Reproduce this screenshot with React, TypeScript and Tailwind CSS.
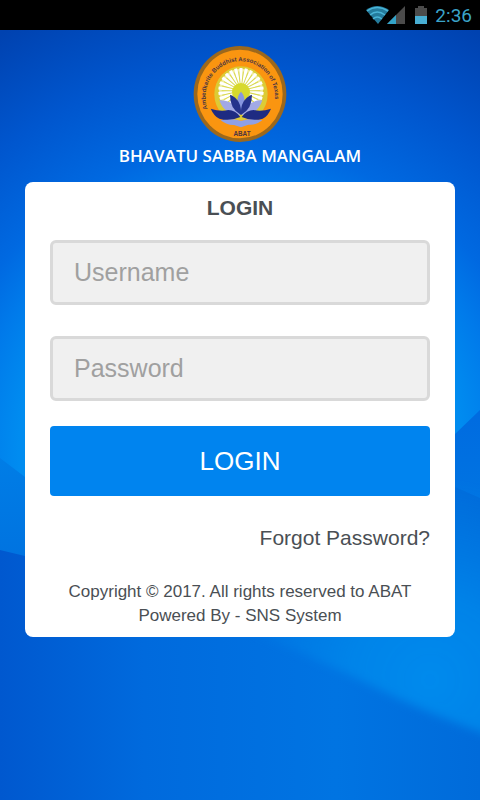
import { useState } from "react";

const rays = Array.from({ length: 26 }, (_, index) => (index * 360) / 26);

function Wallpaper() {
  return (
    <svg
      className="absolute inset-0 -z-10 h-full w-full"
      viewBox="0 0 480 770"
      preserveAspectRatio="none"
      aria-hidden="true"
    >
      <defs>
        <radialGradient id="sky" gradientUnits="userSpaceOnUse" cx="240" cy="420" r="480">
          <stop offset="0" stopColor="#0092f4" />
          <stop offset="0.46" stopColor="#008cf0" />
          <stop offset="0.55" stopColor="#007aea" />
          <stop offset="0.63" stopColor="#0069e1" />
          <stop offset="0.8" stopColor="#0056ce" />
          <stop offset="1" stopColor="#0042b0" />
        </radialGradient>
        <linearGradient id="ridge" gradientUnits="userSpaceOnUse" x1="0" y1="400" x2="0" y2="560">
          <stop offset="0" stopColor="#0080e8" />
          <stop offset="1" stopColor="#0070de" />
        </linearGradient>
        <linearGradient id="peak" gradientUnits="userSpaceOnUse" x1="0" y1="380" x2="0" y2="480">
          <stop offset="0" stopColor="#006be0" />
          <stop offset="1" stopColor="#0075e2" />
        </linearGradient>
        <linearGradient id="floor" x1="0" y1="0" x2="1" y2="0">
          <stop offset="0" stopColor="#0058cf" />
          <stop offset="0.3" stopColor="#006add" />
          <stop offset="0.7" stopColor="#0074e2" />
          <stop offset="1" stopColor="#006bda" />
        </linearGradient>
        <radialGradient id="glow" gradientUnits="userSpaceOnUse" cx="430" cy="650" r="200">
          <stop offset="0" stopColor="#008aed" />
          <stop offset="0.4" stopColor="#0086ea" stopOpacity="0.9" />
          <stop offset="1" stopColor="#0080e8" stopOpacity="0" />
        </radialGradient>
        <filter id="soften" x="-10%" y="-10%" width="120%" height="120%">
          <feGaussianBlur stdDeviation="5" />
        </filter>
      </defs>
      <rect width="480" height="770" fill="url(#sky)" />
      <path d="M0 428 L25 447 L240 560 V770 H0Z" fill="url(#ridge)" />
      <path d="M240 560 L455 404 L480 380 V770 H240Z" fill="url(#peak)" />
      <path d="M0 520 L25 526 L240 570 L455 457 L480 468 V770 H0Z" fill="url(#floor)" />
      <path
        d="M220 590 V440 H520 V716 Q440 690 370 655 Q310 625 220 590Z"
        fill="url(#glow)"
        filter="url(#soften)"
      />
    </svg>
  );
}

function StatusIcons() {
  return (
    <svg className="h-6 w-16" viewBox="0 0 64 24" aria-hidden="true">
      <path d="M1 7 Q12 -1 24 7 L13 21Z" fill="#247b9c" />
      <g fill="none" stroke="#4ab4d6" strokeWidth="1.5">
        <path d="M2 8 Q12 1 23 8" />
        <path d="M5 12 Q12 6 20 12" />
        <path d="M8 16 Q12 12 17 16" />
      </g>
      <path d="M40 3 V21 H22Z" fill="#4b4b4b" />
      <path d="M31 12 V21 H22Z" fill="#33a3c9" />
      <path d="M50 5 H53 V3 H59 V5 H62 V21 H50Z" fill="#4b4b4b" />
      <path d="M50 13 H62 V21 H50Z" fill="#48aed3" />
    </svg>
  );
}

function Logo() {
  return (
    <svg className="h-24 w-24" viewBox="21 19 288 288" role="img" aria-label="ABAT">
      <defs>
        <path id="motto" d="M68 208 A104 107 0 1 1 262 212" />
      </defs>
      <ellipse cx="165" cy="163" rx="139" ry="144" fill="#9c681c" />
      <ellipse cx="165" cy="163" rx="128" ry="133" fill="#fa9510" />
      <ellipse cx="168" cy="164" rx="80" ry="84" fill="#dccb35" />
      <circle cx="168" cy="153" r="66" fill="#efecA0" />
      <g stroke="#ffffff" strokeWidth="9">
        {rays.map((angle) => (
          <path key={angle} d="M168 153 V85" transform={`rotate(${angle} 168 153)`} />
        ))}
      </g>
      <g stroke="#d9d850" strokeWidth="3">
        {rays.map((angle) => (
          <path key={angle} d="M168 153 V95" transform={`rotate(${angle + 7} 168 153)`} />
        ))}
      </g>
      <circle cx="168" cy="157" r="27" fill="#d7d92c" />
      <path d="M87 211 Q166 272 251 211 Q238 247 168 249 Q99 247 87 211Z" fill="#f2a33c" />
      <path d="M107 242 Q135 233 168 244 Q202 233 232 242 Q211 258 190 255 L168 263 L147 256 Q126 257 107 242Z" fill="#8fa0e6" />
      <path d="M168 156 Q183 171 177 192 L168 218 L159 192 Q153 171 168 156Z" fill="#8796df" />
      <path d="M103 182 Q148 180 166 226 Q118 226 103 182Z" fill="#a2a9e5" />
      <path d="M232 182 Q188 180 170 226 Q218 226 232 182Z" fill="#a2a9e5" />
      <path d="M135 165 Q171 179 168 226 Q134 207 135 165Z" fill="#25338c" />
      <path d="M201 165 Q165 179 168 226 Q202 207 201 165Z" fill="#25338c" />
      <path d="M77 207 Q106 217 130 211 Q151 211 166 232 Q134 246 103 237 Q88 231 77 207Z" fill="#1e2b82" />
      <path d="M258 207 Q230 217 206 211 Q185 211 170 232 Q202 246 233 237 Q248 231 258 207Z" fill="#1e2b82" />
      <g fill="#4a3442" className="font-['Liberation_Sans',sans-serif] font-bold">
        <text fontSize="18">
          <textPath href="#motto">Ambedkarite Buddhist Association of Texas</textPath>
        </text>
        <text x="171" y="290" fontSize="19" textAnchor="middle">
          ABAT
        </text>
      </g>
    </svg>
  );
}

const fieldClass =
  "h-[65px] w-full rounded-md border-3 border-[#d9d9d9] bg-[#f0f0f0] px-[21px] text-[25px] text-[#4a4f54] outline-none placeholder:text-[#a0a0a0] placeholder:opacity-100";

export default function App() {
  const [form, setForm] = useState({ username: "", password: "" });

  return (
    <div className="flex min-h-screen flex-col font-['Liberation_Sans',Arial,sans-serif]">
      <header className="flex h-[30px] items-center justify-end gap-1.5 bg-black pr-2">
        <StatusIcons />
        <time className="font-[Roboto,sans-serif] text-[19px] leading-none text-[#3ba4c9]">2:36</time>
      </header>

      <main className="relative isolate flex flex-1 flex-col bg-[#006cdf] px-[25px] pt-4">
        <Wallpaper />
        <div className="flex flex-col items-center">
          <Logo />
          <p className="font-['Open_Sans',sans-serif] text-[17px] leading-7 font-semibold whitespace-nowrap text-white">
            BHAVATU SABBA MANGALAM
          </p>
        </div>

        <section className="mt-3 rounded-lg bg-white px-[25px] pt-3 pb-[9px] text-[#4a4f54]">
          <h1 className="text-center text-[21px] leading-7 font-bold">LOGIN</h1>
          <form className="mt-[18px] flex flex-col" onSubmit={(event) => event.preventDefault()}>
            <input
              type="text"
              aria-label="Username"
              placeholder="Username"
              value={form.username}
              onChange={(event) => setForm({ ...form, username: event.target.value })}
              className={fieldClass}
            />
            <input
              type="password"
              aria-label="Password"
              placeholder="Password"
              value={form.password}
              onChange={(event) => setForm({ ...form, password: event.target.value })}
              className={`${fieldClass} mt-[31px]`}
            />
            <button type="submit" className="mt-[25px] h-[70px] rounded-sm bg-[#0084ef] text-[26px] text-white">
              LOGIN
            </button>
          </form>
          <div className="mt-7 text-right text-[21px] leading-7">
            <a href="#forgot">Forgot Password?</a>
          </div>
          <p className="mt-7 text-center text-[17px] leading-6">
            Copyright © 2017. All rights reserved to ABAT
            <br />
            Powered By - SNS System
          </p>
        </section>
      </main>
    </div>
  );
}
